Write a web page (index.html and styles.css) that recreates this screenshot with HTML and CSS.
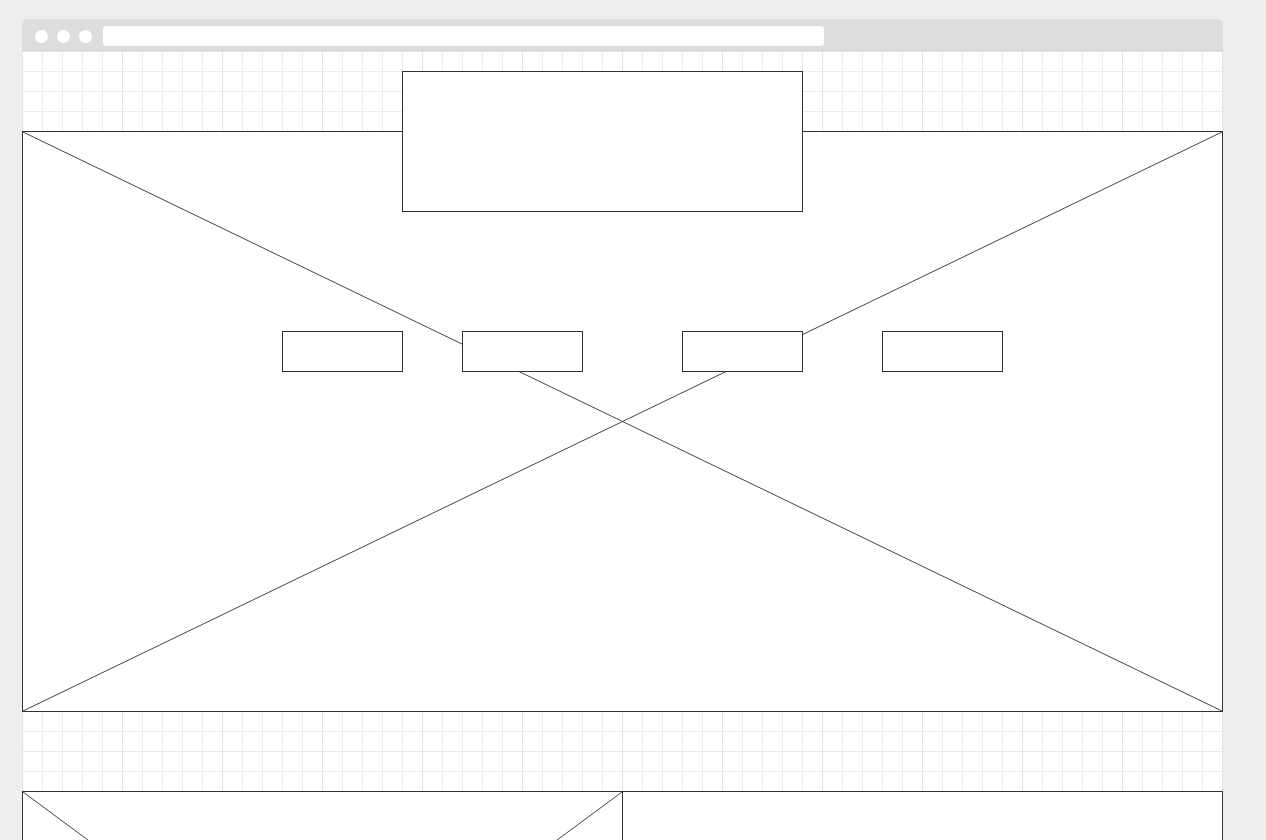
FILE: index.html
```html
<!DOCTYPE html>
<html>
<head>
<meta charset="utf-8">
<link rel="stylesheet" href="styles.css">
</head>
<body>
<div class="frame">
  <div class="titlebar">
    <span class="dot"></span>
    <span class="dot"></span>
    <span class="dot"></span>
    <div class="address"></div>
  </div>
  <div class="content">
    <section class="hero">
      <svg class="xlines" xmlns="http://www.w3.org/2000/svg">
        <line x1="0" y1="0" x2="100%" y2="100%"/>
        <line x1="0" y1="100%" x2="100%" y2="0"/>
      </svg>
      <div class="topbox"></div>
      <div class="btn b1"></div>
      <div class="btn b2"></div>
      <div class="btn b3"></div>
      <div class="btn b4"></div>
    </section>
    <section class="row">
      <div class="media">
        <svg class="xlines" xmlns="http://www.w3.org/2000/svg">
          <line x1="0" y1="0" x2="100%" y2="100%"/>
          <line x1="0" y1="100%" x2="100%" y2="0"/>
        </svg>
      </div>
      <div class="panel"></div>
    </section>
  </div>
</div>
</body>
</html>
```

FILE: styles.css
```css
html, body {
  margin: 0;
  padding: 0;
  background: #eeeeee;
  overflow: hidden;
}
body {
  padding: 19px 0 0 22px;
  height: 840px;
  box-sizing: border-box;
}
.frame {
  width: 1201px;
  border-radius: 5px 5px 0 0;
  overflow: hidden;
  background: #fff;
}
.titlebar {
  height: 32px;
  background: #dddddd;
  border-bottom: 1px solid #d2d2d2;
  box-sizing: border-box;
  display: flex;
  align-items: center;
  padding: 3px 0 0 13px;
  gap: 9px;
}
.dot {
  width: 13px;
  height: 13px;
  border-radius: 50%;
  background: #fff;
  flex: none;
}
.address {
  margin-left: 2px;
  width: 721px;
  height: 20px;
  background: #fff;
  border-radius: 3px;
}
.content {
  padding-top: 80px;
  height: 789px;
  overflow: hidden;
  background-color: #fff;
  background-image:
    linear-gradient(to right, #e2e2e2 1px, transparent 1px),
    linear-gradient(to bottom, #e9e9e9 1px, transparent 1px),
    linear-gradient(to right, #ececec 1px, transparent 1px),
    linear-gradient(to bottom, #ececec 1px, transparent 1px);
  background-size: 100px 100px, 100px 100px, 20px 20px, 20px 20px;
  background-position: 0 0, 0 0, 0 0, 0 0;
  box-sizing: border-box;
}
.hero {
  position: relative;
  height: 581px;
  border: 1px solid #333;
  box-sizing: border-box;
  background: #fff;
}
.xlines {
  position: absolute;
  inset: 0;
  width: 100%;
  height: 100%;
  display: block;
}
.xlines line {
  stroke: #444;
  stroke-width: 1;
}
.topbox {
  position: absolute;
  left: 379px;
  top: -61px;
  width: 401px;
  height: 141px;
  border: 1px solid #333;
  box-sizing: border-box;
  background: #fff;
}
.btn {
  position: absolute;
  top: 199px;
  width: 121px;
  height: 41px;
  border: 1px solid #333;
  box-sizing: border-box;
  background: #fff;
}
.b1 { left: 259px; }
.b2 { left: 439px; }
.b3 { left: 659px; }
.b4 { left: 859px; }
.row {
  margin-top: 79px;
  display: flex;
}
.media, .panel {
  position: relative;
  height: 445px;
  border: 1px solid #333;
  box-sizing: border-box;
  background: #fff;
  flex: none;
}
.media {
  width: 601px;
}
.panel {
  flex: 1;
  border-left: none;
}
```
